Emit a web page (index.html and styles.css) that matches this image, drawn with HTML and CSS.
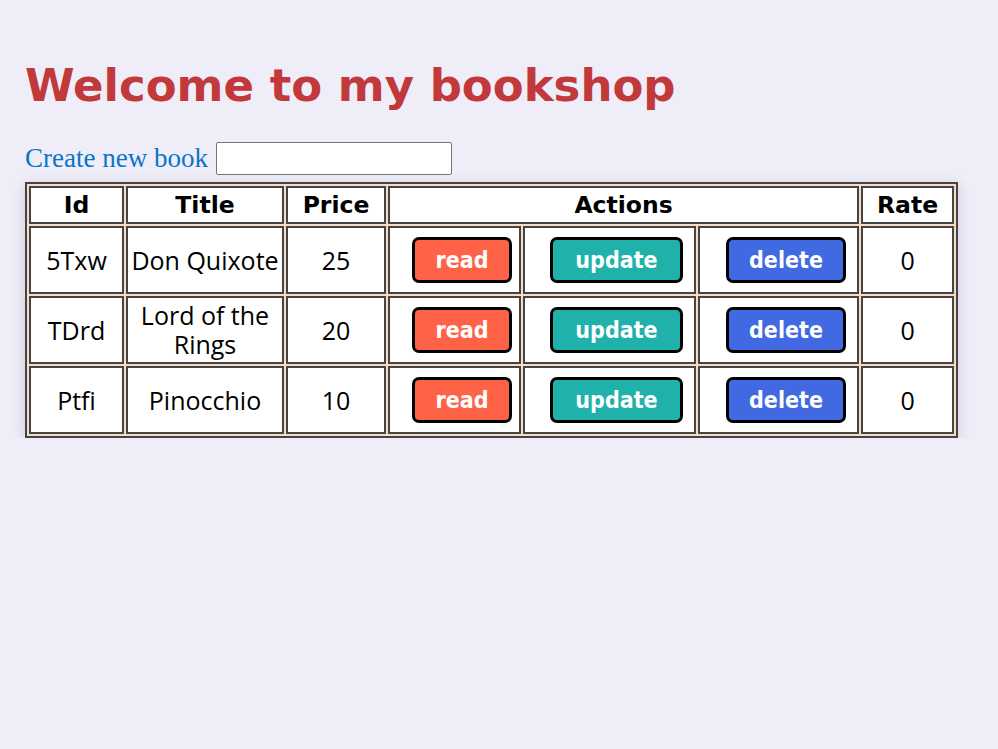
FILE: index.html
```html
<!DOCTYPE html>
<html>
<head>
<meta charset="utf-8">
<link rel="stylesheet" href="styles.css">
</head>
<body>
<div class="page">
  <h1 class="title">Welcome to my bookshop</h1>
  <div class="toolbar">
    <a class="create-link" href="#">Create new book</a>
    <input class="create-input" type="text">
  </div>
  <table class="books">
    <colgroup>
      <col class="c-id"><col class="c-title"><col class="c-price">
      <col class="c-read"><col class="c-update"><col class="c-delete"><col class="c-rate">
    </colgroup>
    <thead>
      <tr><th>Id</th><th>Title</th><th>Price</th><th colspan="3">Actions</th><th>Rate</th></tr>
    </thead>
    <tbody>
      <tr>
        <td>5Txw</td><td>Don Quixote</td><td>25</td>
        <td><button class="btn btn-read">read</button></td>
        <td><button class="btn btn-update">update</button></td>
        <td><button class="btn btn-delete">delete</button></td>
        <td>0</td>
      </tr>
      <tr>
        <td>TDrd</td><td>Lord of the Rings</td><td>20</td>
        <td><button class="btn btn-read">read</button></td>
        <td><button class="btn btn-update">update</button></td>
        <td><button class="btn btn-delete">delete</button></td>
        <td>0</td>
      </tr>
      <tr>
        <td>Ptfi</td><td>Pinocchio</td><td>10</td>
        <td><button class="btn btn-read">read</button></td>
        <td><button class="btn btn-update">update</button></td>
        <td><button class="btn btn-delete">delete</button></td>
        <td>0</td>
      </tr>
    </tbody>
  </table>
</div>
</body>
</html>
```

FILE: styles.css
```css
html, body {
  margin: 0;
  padding: 0;
  background: #efedf8;
}

.page {
  padding: 0 0 0 25px;
}

.title {
  margin: 58px 0 0 0;
  font-family: "DejaVu Sans", sans-serif;
  font-weight: bold;
  font-size: 45px;
  line-height: 56px;
  color: #c1393b;
}

.toolbar {
  display: flex;
  align-items: center;
  gap: 8px;
  margin-top: 28px;
  height: 33px;
}

.create-link {
  font-family: "Liberation Serif", serif;
  font-size: 27px;
  color: #0b74c9;
  text-decoration: none;
}

.create-input {
  box-sizing: border-box;
  width: 236px;
  height: 33px;
  margin: 0;
  border: 1px solid #767676;
  border-radius: 2px;
  background: #fff;
}

.books {
  margin-top: 7px;
  width: 933px;
  table-layout: fixed;
  border: 2px solid #454545;
  border-spacing: 2px;
  background: #f9dcc6;
  box-shadow: 0 3px 12px rgba(60, 50, 90, 0.18);
}

.c-id { width: 95px; }
.c-title { width: 158px; }
.c-price { width: 100px; }
.c-read { width: 133px; }
.c-update { width: 173px; }
.c-delete { width: 161px; }
.c-rate { width: 93px; }

.books th,
.books td {
  background: #fff;
  border: 2px solid #454545;
  text-align: center;
  padding: 0;
  color: #000;
}

.books th {
  font-family: "DejaVu Sans", sans-serif;
  font-weight: bold;
  font-size: 23.5px;
  height: 34px;
}

.books td {
  font-family: "Open Sans", sans-serif;
  font-size: 25px;
  line-height: 29px;
  height: 64px;
}

.btn {
  margin: 0 0 0 15px;
  height: 46px;
  padding: 0 20px;
  border: 3px solid #000;
  border-radius: 7px;
  font-family: "DejaVu Sans Condensed", "DejaVu Sans", sans-serif;
  font-weight: bold;
  font-size: 23px;
  color: #fff;
  vertical-align: middle;
}

.btn-read { background: #ff6347; }
.btn-update { background: #20b2aa; padding: 0 22px; margin-left: 14px; }
.btn-delete { background: #4169e1; }
```
